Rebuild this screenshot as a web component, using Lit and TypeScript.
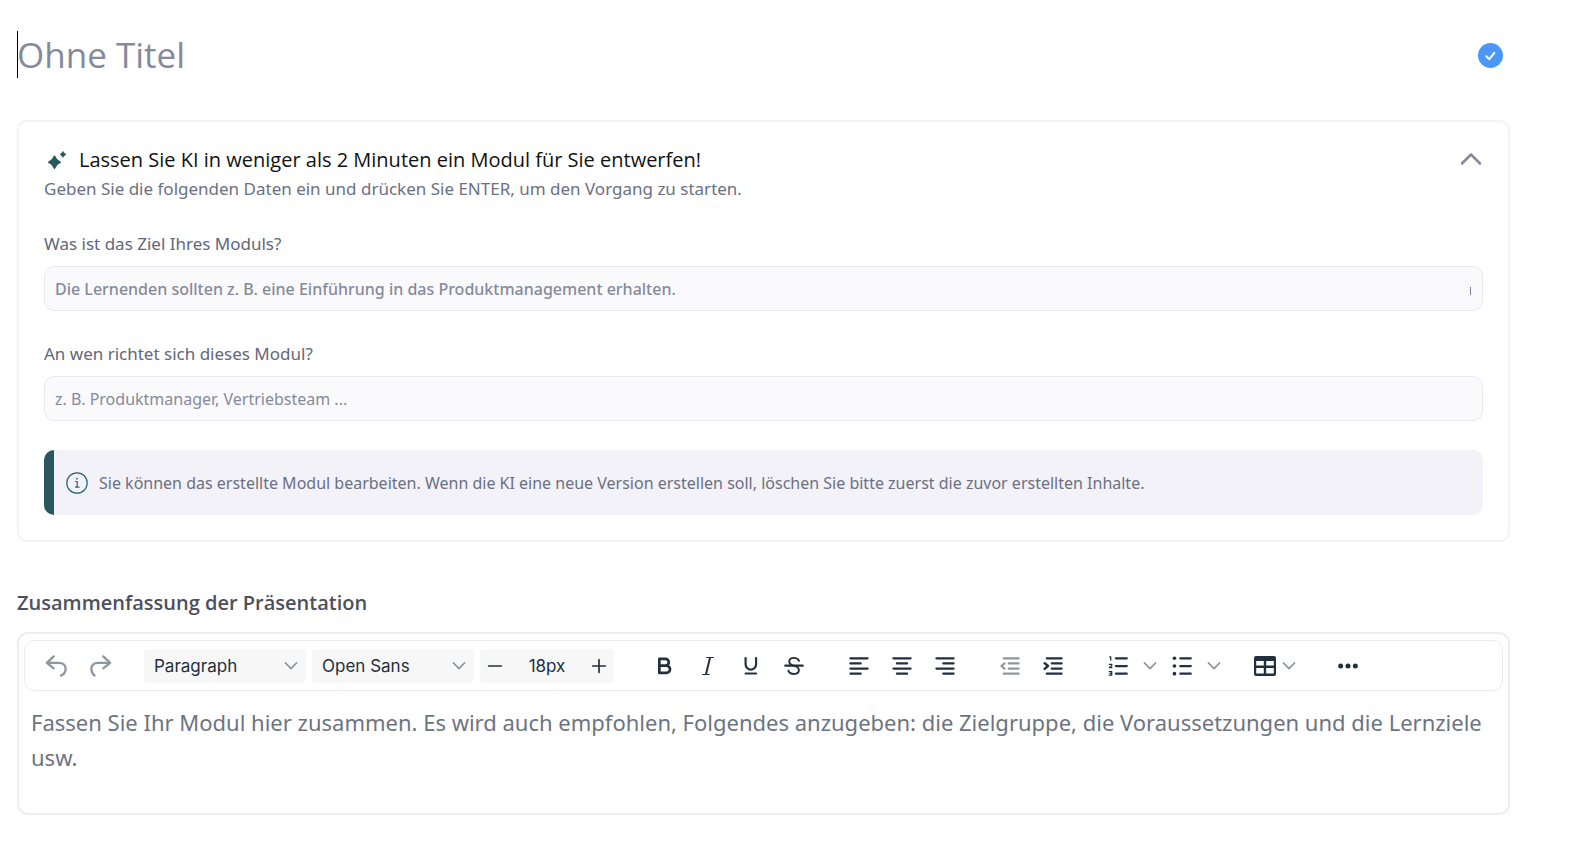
import { LitElement, html, css, svg, TemplateResult } from "lit";
import { customElement, property } from "lit/decorators.js";

const stroke = (d: string, w = 2) =>
  svg`<path d=${d} fill="none" stroke="currentColor" stroke-width=${w} stroke-linecap="round" stroke-linejoin="round"/>`;

const icon = (body: unknown): TemplateResult =>
  html`<svg class="icon" viewBox="0 0 24 24" aria-hidden="true">${body}</svg>`;

const chevron = html`<svg class="chevron" width="14" height="10" viewBox="0 0 14 10" aria-hidden="true">
  ${stroke("M1.5 2 7 7.700 12.5 2", 1.8)}
</svg>`;

const icons = {
  undo: icon(stroke("M9.500 1.500 2 8.500l7.500 6M2.500 8.500h12.500c4.500 0 7.500 2.500 7.500 6.500 0 3-1.500 6-5 7.500", 2.500)),
  redo: icon(stroke("M14.500 1.500 22 8.500l-7.500 6M21.500 8.500H9c-4.500 0-7.500 2.500-7.500 6.500 0 3 1 5.500 3.500 7.500", 2.500)),
  bold: icon(stroke("M5.200 3.500h7.300a4 4 0 0 1 0 8.100H5.200zM5.200 11.600h8.500a4.300 4.300 0 0 1 0 8.700H5.200z", 3.200)),
  italic: icon(svg`${stroke("M14.300 2.500 9.700 21.500", 2.400)}${stroke("M10.500 1.800h8M5.500 22.200h8", 1.400)}`),
  underline: icon(svg`${stroke("M5.500 2.500v7.500a6.300 6.300 0 0 0 12.600 0V2.500", 2.600)}${stroke("M5.500 21h12.600", 2.600)}`),
  strike: icon(svg`${stroke("M18 5.800C17 3.200 15 2.200 12 2.200 8.300 2.200 6.300 4 6.300 6.700c0 2.900 2.700 4.300 5.700 5.100 3.600.9 5.900 2.200 5.900 5 0 3-2.400 4.700-5.900 4.700-3.200 0-5.800-1.300-6.800-4", 2.300)}${stroke("M1.500 11.600h21", 2.600)}`),
  left: icon(stroke("M1.700 2.700h20.600M1.700 8.900h12.300M1.700 15h20.600M1.700 21.200h12.300", 2.700)),
  center: icon(stroke("M1.700 2.700h20.600M5.900 8.900h12.200M1.700 15h20.600M5.900 21.200h12.200", 2.700)),
  right: icon(stroke("M1.700 2.700h20.600M10 8.900h12.300M1.700 15h20.600M10 21.200h12.300", 2.700)),
  outdent: icon(svg`${stroke("M4.500 2.700h17.800M10.500 8.900h11.800M10.500 15h11.800M4.500 21.200h17.800", 2.700)}${stroke("M5.500 8.800 1.700 12l3.800 3.300", 2.500)}`),
  indent: icon(svg`${stroke("M4.500 2.700h17.800M10.500 8.900h11.800M10.500 15h11.800M4.500 21.200h17.800", 2.700)}${stroke("M2 8.600 6 12 2 15.500", 2.900)}`),
  numbered: icon(svg`${stroke("M9.500 2.700h13M9.500 12h13M9.500 21.200h13", 2.700)}${stroke("M2 1h1.300V5M1.500 10h3v1.800l-2.800 2.100h3M1.500 18.800h3v4.200h-3M2.500 20.900h2", 1.500)}`),
  bullets: icon(svg`${stroke("M10 2.700h12.500M10 12h12.500M10 21.200h12.500", 2.700)}
    <circle cx="2.900" cy="2.700" r="2.200"/><circle cx="2.900" cy="12" r="2.200"/><circle cx="2.900" cy="21.200" r="2.200"/>`),
  table: html`<svg class="grid" width="22" height="20" viewBox="0 0 22 20" aria-hidden="true">
    <path fill-rule="evenodd" d="M2 0h18a2 2 0 0 1 2 2v16a2 2 0 0 1-2 2H2a2 2 0 0 1-2-2V2a2 2 0 0 1 2-2zM2.200 5v4.600h7.600V5zM12.200 5v4.600h7.600V5zM2.200 12v5.600h7.600V12zM12.200 12v5.600h7.600V12z"/>
  </svg>`,
  more: icon(svg`<circle cx="3.200" cy="12" r="3"/><circle cx="12" cy="12" r="3"/><circle cx="20.800" cy="12" r="3"/>`),
  minus: icon(stroke("M3.500 12h17", 2.200)),
  plus: icon(stroke("M3.500 12h17M12 3.500v17", 2.200)),
};

@customElement("editor-toolbar")
class EditorToolbar extends LitElement {
  static styles = css`
    :host {
      display: block;
      border: 1px solid #ebebf3;
      border-radius: 10px;
      color: #222f3e;
      font-family: Inter, "Liberation Sans", sans-serif;
    }
    .bar {
      display: flex;
      align-items: center;
      gap: 22px;
      height: 49px;
      padding-left: 8px;
    }
    .group {
      display: flex;
      align-items: center;
    }
    .group.fields {
      gap: 6px;
      margin-left: -1px;
      margin-right: 7px;
    }
    button {
      display: flex;
      align-items: center;
      justify-content: center;
      width: 43px;
      height: 34px;
      padding: 0;
      border: 0;
      background: none;
      color: inherit;
    }
    .history button {
      width: 45px;
    }
    .narrow {
      width: 21px;
    }
    .wide {
      width: 58px;
      gap: 6px;
    }
    button:disabled {
      color: #90959e;
    }
    .icon {
      width: 20px;
      height: 20px;
      fill: currentColor;
    }
    .history .icon {
      width: 22px;
      height: 22px;
    }
    .grid {
      fill: currentColor;
    }
    .chevron {
      flex: none;
      color: #90959e;
    }
    .pick {
      position: relative;
      display: flex;
      align-items: center;
      width: 162px;
      height: 34px;
      border-radius: 4px;
      background: #f7f7f7;
    }
    .pick .chevron {
      position: absolute;
      right: 8px;
      pointer-events: none;
    }
    select {
      appearance: none;
      width: 100%;
      height: 100%;
      padding: 0 30px 0 10px;
      border: 0;
      background: none;
      color: inherit;
      font: 17px Inter, "Liberation Sans", sans-serif;
    }
    .size {
      display: flex;
      align-items: center;
      width: 134px;
      height: 34px;
      border-radius: 4px;
      background: #f7f7f7;
    }
    .size button {
      flex: none;
      width: 30px;
    }
    .size .icon {
      width: 18px;
      height: 18px;
    }
    .size input {
      width: 100%;
      min-width: 0;
      padding: 0;
      border: 0;
      background: none;
      color: inherit;
      text-align: center;
      font: 17px Inter, "Liberation Sans", sans-serif;
    }
  `;

  private tool(label: string, glyph: TemplateResult, disabled = false) {
    return html`<button type="button" aria-label=${label} ?disabled=${disabled}>${glyph}</button>`;
  }

  private split(label: string, glyph: TemplateResult) {
    return html`${this.tool(label, glyph)}
      <button type="button" class="narrow" aria-label="${label}: Optionen">${chevron}</button>`;
  }

  private pick(label: string, value: string) {
    return html`<div class="pick">
      <select aria-label=${label}><option>${value}</option></select>${chevron}
    </div>`;
  }

  render() {
    return html`<div class="bar" role="toolbar">
      <div class="group history">
        ${this.tool("Rückgängig", icons.undo, true)}${this.tool("Wiederholen", icons.redo, true)}
      </div>
      <div class="group fields">
        ${this.pick("Absatzformat", "Paragraph")} ${this.pick("Schriftart", "Open Sans")}
        <div class="size">
          ${this.tool("Kleiner", icons.minus)}
          <input aria-label="Schriftgröße" value="18px" />
          ${this.tool("Größer", icons.plus)}
        </div>
      </div>
      <div class="group">
        ${this.tool("Fett", icons.bold)}${this.tool("Kursiv", icons.italic)}
        ${this.tool("Unterstrichen", icons.underline)}${this.tool("Durchgestrichen", icons.strike)}
      </div>
      <div class="group">
        ${this.tool("Linksbündig", icons.left)}${this.tool("Zentriert", icons.center)}
        ${this.tool("Rechtsbündig", icons.right)}
      </div>
      <div class="group">
        ${this.tool("Einzug verkleinern", icons.outdent, true)}${this.tool("Einzug vergrößern", icons.indent)}
      </div>
      <div class="group">
        ${this.split("Nummerierte Liste", icons.numbered)}${this.split("Aufzählung", icons.bullets)}
      </div>
      <div class="group">
        <button type="button" class="wide" aria-label="Tabelle">${icons.table}${chevron}</button>
      </div>
      <div class="group">${this.tool("Mehr", icons.more)}</div>
    </div>`;
  }
}

@customElement("prompt-field")
class PromptField extends LitElement {
  @property() label = "";
  @property() hint = "";
  @property({ type: Boolean }) strong = false;

  static styles = css`
    :host {
      display: block;
    }
    label {
      display: block;
      margin-bottom: 10px;
      color: #626779;
      font: 17px/24px "Noto Sans", "Open Sans", sans-serif;
    }
    .box {
      display: flex;
      align-items: center;
      height: 45px;
      padding: 0 10px;
      box-sizing: border-box;
      border: 1px solid #e9e8f0;
      border-radius: 10px;
      background: #fafafc;
    }
    input {
      flex: 1;
      min-width: 0;
      padding: 0;
      border: 0;
      outline: 0;
      background: none;
      font: 16px/24px "Noto Sans", "Open Sans", sans-serif;
    }
    input::placeholder {
      color: #858a9b;
      opacity: 1;
    }
    .strong input {
      font-weight: 500;
    }
    .mark {
      width: 1px;
      height: 8px;
      margin-top: 4px;
      margin-right: 1px;
      background: #7b8092;
    }
  `;

  render() {
    return html`<label for="field">${this.label}</label>
      <div class="box ${this.strong ? "strong" : ""}">
        <input id="field" type="text" placeholder=${this.hint} />
        ${this.strong ? html`<span class="mark"></span>` : ""}
      </div>`;
  }
}

@customElement("app-root")
class AppRoot extends LitElement {
  static styles = css`
    :host {
      display: block;
      padding: 30px 67px 30px 17px;
      background: #fff;
      font-family: "Noto Sans", "Open Sans", sans-serif;
    }
    .title {
      position: relative;
      display: flex;
      align-items: center;
      height: 50px;
      padding-right: 7px;
    }
    .title input {
      flex: 1;
      min-width: 0;
      padding: 0;
      border: 0;
      outline: 0;
      background: none;
      font: 35px/50px "Open Sans", sans-serif;
    }
    .title input::placeholder {
      color: #858a9b;
      opacity: 1;
    }
    .caret {
      position: absolute;
      left: 0;
      top: 1px;
      width: 1px;
      height: 47px;
      background: #000;
    }
    .card {
      margin-top: 40px;
      padding: 24px 25px 25px;
      border: 2px solid #f3f2f8;
      border-radius: 10px;
    }
    .head {
      display: flex;
      align-items: center;
      justify-content: space-between;
    }
    h2 {
      display: flex;
      align-items: center;
      gap: 12px;
      margin: 0;
      padding-left: 3px;
      color: #111;
      font: 400 20px/28px "Open Sans", sans-serif;
    }
    .toggle {
      display: flex;
      padding: 0 1px 2px 0;
      border: 0;
      background: none;
      color: #858a9b;
    }
    .lead {
      margin: 3px 0 31px;
      color: #6b7082;
      font-size: 17px;
      line-height: 24px;
    }
    prompt-field + prompt-field {
      margin-top: 31px;
    }
    .note {
      display: flex;
      align-items: center;
      gap: 11px;
      height: 65px;
      margin-top: 29px;
      box-sizing: border-box;
      padding: 0 12px;
      border-left: 10px solid #29575f;
      border-radius: 10px;
      background: #f3f2f8;
      color: #6b7082;
      font-size: 16px;
      line-height: 24px;
    }
    .note svg {
      flex: none;
    }
    .note p {
      margin: 0;
    }
    h3 {
      margin: 47px 0 15px;
      color: #4c505d;
      font: 600 20px/28px "Open Sans", sans-serif;
    }
    .editor {
      padding: 6px 5px;
      border: 2px solid #eeeeef;
      border-radius: 11px;
    }
    textarea {
      display: block;
      width: 100%;
      height: 116px;
      box-sizing: border-box;
      padding: 14px 5px 0 7px;
      border: 0;
      outline: 0;
      resize: none;
      background: none;
      font: 22px/35px "Noto Sans", "Open Sans", sans-serif;
    }
    textarea::placeholder {
      color: #6d7481;
      opacity: 1;
    }
  `;

  render() {
    return html`
      <header class="title">
        <input type="text" aria-label="Titel" placeholder="Ohne Titel" />
        <span class="caret"></span>
        <svg width="25" height="25" viewBox="0 0 25 25" role="img" aria-label="Gespeichert">
          <circle cx="12.5" cy="12.5" r="12.5" fill="#4b97f8" />
          <path d="M8.300 13.200l3 3 5-6.400" fill="none" stroke="#fff" stroke-width="2" stroke-linecap="round" stroke-linejoin="round" />
        </svg>
      </header>
      <section class="card">
        <div class="head">
          <h2>
            <svg width="20" height="20" viewBox="0 0 20 20" fill="#29575f" aria-hidden="true">
              <path d="M7.500 6Q9.200 10.400 13.500 12.300 9.200 14.200 7.500 18.500 5.800 14.200 1.500 12.300 5.800 10.400 7.500 6z" stroke="#29575f" stroke-width="1.200" stroke-linejoin="round" />
              <path d="M16 1.500Q16.900 3.500 18.900 4.400 16.900 5.300 16 7.300 15.100 5.300 13.100 4.400 15.100 3.500 16 1.500z" stroke="#29575f" stroke-width=".8" stroke-linejoin="round" />
            </svg>
            Lassen Sie KI in weniger als 2 Minuten ein Modul für Sie entwerfen!
          </h2>
          <button type="button" class="toggle" aria-label="Einklappen">
            <svg width="22" height="14" viewBox="0 0 22 14">${stroke("M2 11.500 11 2.500 20 11.500", 2.5)}</svg>
          </button>
        </div>
        <p class="lead">Geben Sie die folgenden Daten ein und drücken Sie ENTER, um den Vorgang zu starten.</p>
        <prompt-field
          strong
          label="Was ist das Ziel Ihres Moduls?"
          hint="Die Lernenden sollten z. B. eine Einführung in das Produktmanagement erhalten."
        ></prompt-field>
        <prompt-field label="An wen richtet sich dieses Modul?" hint="z. B. Produktmanager, Vertriebsteam ..."></prompt-field>
        <div class="note">
          <svg width="22" height="22" viewBox="0 0 22 22" fill="none" stroke="#29666f" aria-hidden="true">
            <circle cx="11" cy="11" r="10.200" stroke-width="1.200" />
            <path d="M9.200 9.500h2v5.700M9 15.200h4.500" stroke-width="1.200" />
            <circle cx="11" cy="6.700" r=".9" fill="#29666f" stroke="none" />
          </svg>
          <p>Sie können das erstellte Modul bearbeiten. Wenn die KI eine neue Version erstellen soll, löschen Sie bitte zuerst die zuvor erstellten Inhalte.</p>
        </div>
      </section>
      <h3>Zusammenfassung der Präsentation</h3>
      <div class="editor">
        <editor-toolbar></editor-toolbar>
        <textarea
          aria-label="Zusammenfassung der Präsentation"
          placeholder="Fassen Sie Ihr Modul hier zusammen. Es wird auch empfohlen, Folgendes anzugeben: die Zielgruppe, die Voraussetzungen und die Lernziele usw."
        ></textarea>
      </div>
    `;
  }
}
